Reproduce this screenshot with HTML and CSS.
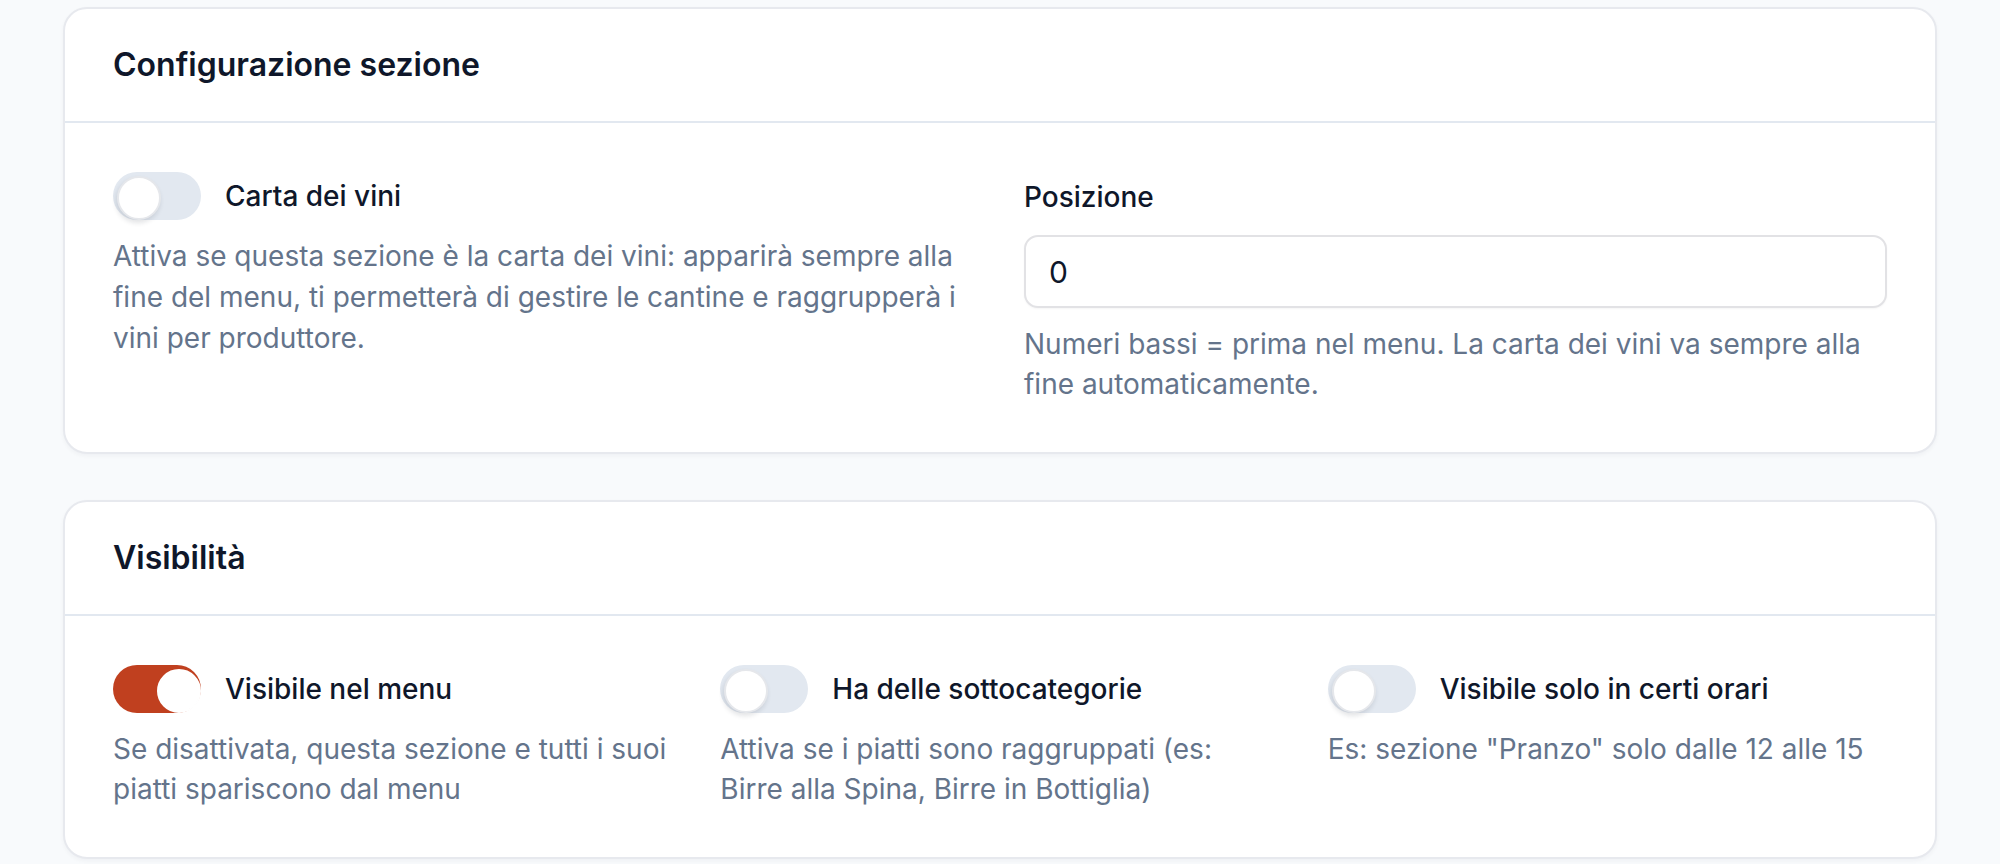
FILE: index.html
```html
<!DOCTYPE html>
<html lang="it">
<head>
  <meta charset="utf-8">
  <meta name="viewport" content="width=device-width, initial-scale=1.0">
  <title>Configurazione sezione</title>
  <link rel="stylesheet" href="styles.css">
</head>
<body>
  <div class="page">

    <div class="card">
      <div class="card-header">
        <h2>Configurazione sezione</h2>
      </div>
      <div class="card-body grid-2">
        <div class="field">
          <label class="switch-row">
            <span class="switch">
              <input type="checkbox" name="isWineList">
              <span class="track"></span>
            </span>
            <span class="switch-label">Carta dei vini</span>
          </label>
          <p class="help">Attiva se questa sezione è la carta dei vini: apparirà sempre alla fine del menu, ti permetterà di gestire le cantine e raggrupperà i vini per produttore.</p>
        </div>

        <div class="field">
          <label class="field-label" for="position">Posizione</label>
          <input class="text-input" type="number" id="position" name="position" value="0">
          <p class="help">Numeri bassi = prima nel menu. La carta dei vini va sempre alla fine automaticamente.</p>
        </div>
      </div>
    </div>

    <div class="card">
      <div class="card-header">
        <h2>Visibilità</h2>
      </div>
      <div class="card-body grid-3">
        <div class="field">
          <label class="switch-row">
            <span class="switch">
              <input type="checkbox" name="visible" checked>
              <span class="track"></span>
            </span>
            <span class="switch-label">Visibile nel menu</span>
          </label>
          <p class="help">Se disattivata, questa sezione e tutti i suoi piatti spariscono dal menu</p>
        </div>

        <div class="field">
          <label class="switch-row">
            <span class="switch">
              <input type="checkbox" name="hasSubcategories">
              <span class="track"></span>
            </span>
            <span class="switch-label">Ha delle sottocategorie</span>
          </label>
          <p class="help">Attiva se i piatti sono raggruppati (es: Birre alla Spina, Birre in Bottiglia)</p>
        </div>

        <div class="field">
          <label class="switch-row">
            <span class="switch">
              <input type="checkbox" name="timeRestricted">
              <span class="track"></span>
            </span>
            <span class="switch-label">Visibile solo in certi orari</span>
          </label>
          <p class="help">Es: sezione "Pranzo" solo dalle 12 alle 15</p>
        </div>
      </div>
    </div>

  </div>
</body>
</html>
```

FILE: styles.css
```css
* {
  box-sizing: border-box;
}

body {
  background-color: #f8fafc;
  font-family: Inter, "Noto Sans", Arial, sans-serif;
  color: #0f172a;
  margin: 0;
  padding: 0;
}

.page {
  padding: 7px 63px;
  display: flex;
  flex-direction: column;
  gap: 46px;
}

.card {
  background-color: #ffffff;
  border: 2px solid #e7e9ee;
  border-radius: 24px;
  box-shadow: 0 2px 4px rgba(15, 23, 42, 0.04);
}

.card-header {
  padding: 32px 48px;
  border-bottom: 2px solid #e2e8f0;
}

.card-header h2 {
  margin: 0;
  font-size: 32px;
  line-height: 48px;
  font-weight: 600;
  color: #0f172a;
}

.card-body {
  padding: 49px 48px 48px;
  display: grid;
  column-gap: 48px;
}

.grid-2 {
  grid-template-columns: 1fr 1fr;
}

.grid-3 {
  grid-template-columns: 1fr 1fr 1fr;
}

.switch-row {
  display: flex;
  align-items: center;
  gap: 24px;
  cursor: pointer;
}

.switch {
  position: relative;
  display: inline-block;
  width: 88px;
  height: 48px;
  flex-shrink: 0;
}

.switch input {
  display: none;
}

.track {
  display: block;
  width: 100%;
  height: 100%;
  border-radius: 24px;
  background-color: #e2e8f0;
  transition: background-color 0.2s;
}

.track::after {
  content: "";
  position: absolute;
  top: 4px;
  left: 4px;
  width: 40px;
  height: 40px;
  border-radius: 50%;
  background-color: #ffffff;
  border: 2px solid #e5e7eb;
  box-shadow: -1px 3px 5px rgba(15, 23, 42, 0.12);
  transition: transform 0.2s;
}

.switch input:checked + .track {
  background-color: #c0401f;
}

.switch input:checked + .track::after {
  transform: translateX(40px);
  border-color: #ffffff;
  box-shadow: none;
}

.switch-label {
  font-size: 28px;
  line-height: 40px;
  font-weight: 500;
  color: #0f172a;
}

.field-label {
  display: block;
  font-size: 28px;
  line-height: 40px;
  font-weight: 500;
  color: #0f172a;
  margin-top: 5px;
  margin-bottom: 18px;
}

.text-input {
  display: block;
  width: 100%;
  height: 73px;
  padding: 0 23px;
  border: 2px solid #e2e2e5;
  border-radius: 14px;
  font-family: inherit;
  font-size: 30px;
  color: #0f172a;
  outline: none;
  box-shadow: 0 1px 2px rgba(0, 0, 0, 0.04);
  -moz-appearance: textfield;
}

.text-input::-webkit-outer-spin-button,
.text-input::-webkit-inner-spin-button {
  -webkit-appearance: none;
  margin: 0;
}

.help {
  margin: 16px 0 0;
  font-size: 28px;
  line-height: 40px;
  color: #64748b;
}

.grid-2 .field:first-child .help {
  line-height: 41px;
}
```
